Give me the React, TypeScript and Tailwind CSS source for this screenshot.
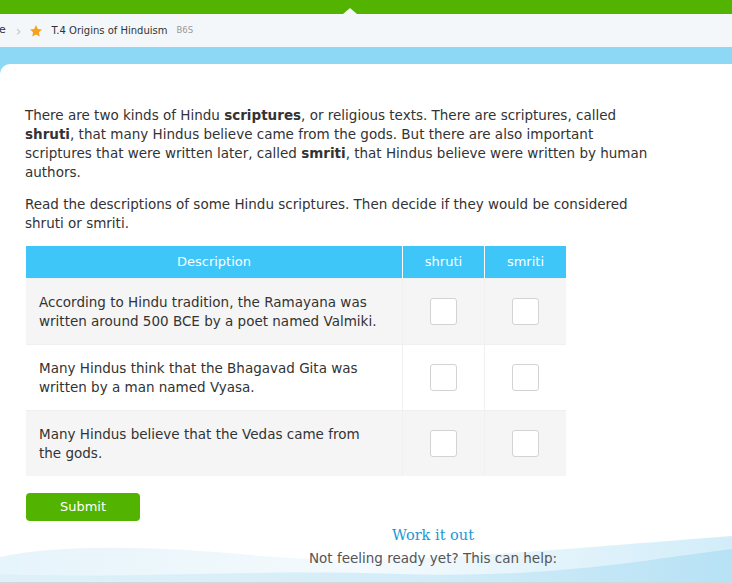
import React from "react";

const rows = [
  "According to Hindu tradition, the Ramayana was written around 500 BCE by a poet named Valmiki.",
  "Many Hindus think that the Bhagavad Gita was written by a man named Vyasa.",
  "Many Hindus believe that the Vedas came from the gods.",
];

function Box() {
  return <div className="w-[27px] h-[27px] bg-white border border-[#d3d3d3] rounded-[3px]" />;
}

export default function App() {
  return (
    <div className="w-[732px] h-[584px] overflow-hidden bg-[#8dd8f5] text-[#333]" style={{ fontFamily: '"DejaVu Sans", Verdana, sans-serif' }}>
      <div className="relative h-[14px] bg-[#52b400]">
        <div className="absolute left-[343px] top-[8px] w-0 h-0 border-l-[7px] border-r-[7px] border-b-[6px] border-l-transparent border-r-transparent border-b-[#f3f7fa]" />
      </div>
      <div className="h-[33px] bg-[#f3f7fa] flex items-center text-[10px]">
        <span className="ml-[-1px] text-[#333] text-[11px]">e</span>
        <span className="ml-[10px] text-[#c4c4c4] text-[14px] leading-none">›</span>
        <svg className="ml-[8px]" width="14" height="14" viewBox="0 0 24 24">
          <path d="M12 1.8l3.1 6.6 7.2.9-5.3 5 1.4 7.1L12 17.9l-6.4 3.5 1.4-7.1-5.3-5 7.2-.9z" fill="#f7a21b" />
        </svg>
        <span className="ml-[8px] text-[#333]">T.4 Origins of Hinduism</span>
        <span className="ml-[9px] text-[8.5px] text-[#999]">B6S</span>
      </div>
      <div className="h-[17px]" />
      <div className="relative h-[520px] bg-white rounded-tl-[10px] overflow-hidden">
        <svg className="absolute left-0 bottom-0" width="732" height="60" viewBox="0 0 732 60" preserveAspectRatio="none">
          <defs>
            <linearGradient id="g1" x1="0" y1="0" x2="1" y2="0">
              <stop offset="0" stopColor="#e6f4fb" />
              <stop offset="0.5" stopColor="#f4fafd" />
              <stop offset="1" stopColor="#d2edf9" />
            </linearGradient>
            <linearGradient id="g2" x1="0" y1="0" x2="1" y2="0">
              <stop offset="0" stopColor="#dcf0fa" />
              <stop offset="0.6" stopColor="#cbe9f7" />
              <stop offset="1" stopColor="#b0dff4" />
            </linearGradient>
          </defs>
          <path d="M0 33 C 60 20, 160 22, 260 32 C 380 42, 500 30, 732 12 L732 60 L0 60 Z" fill="url(#g1)" />
          <path d="M0 50 C 120 55, 250 45, 400 50 C 550 55, 650 35, 732 25 L732 60 L0 60 Z" fill="url(#g2)" opacity="0.8" />
          <rect x="0" y="58" width="732" height="2" fill="#d6d6d6" />
        </svg>
        <div className="relative pl-[25px] pt-[42px]">
          <div className="w-[632px] text-[13.5px] leading-[19px]">
            <p>
              There are two kinds of Hindu <b>scriptures</b>, or religious texts. There are scriptures, called <b>shruti</b>, that many Hindus believe came from the gods. But there are also important scriptures that were written later, called <b>smriti</b>, that Hindus believe were written by human authors.
            </p>
            <p className="mt-[13px]">
              Read the descriptions of some Hindu scriptures. Then decide if they would be considered shruti or smriti.
            </p>
          </div>
          <div className="mt-[13px] ml-[1px] w-[540px]">
            <div className="flex h-[32px] bg-[#3ec6f8] text-white text-[13px]">
              <div className="w-[376px] flex items-center justify-center">Description</div>
              <div className="w-[1px] bg-white" />
              <div className="w-[81px] flex items-center justify-center">shruti</div>
              <div className="w-[1px] bg-white" />
              <div className="w-[81px] flex items-center justify-center">smriti</div>
            </div>
            {rows.map((r, i) => (
              <div key={i} className={`flex h-[66px] border-t border-[#f0f0f0] ${i % 2 === 0 ? "bg-[#f5f5f5]" : "bg-white"}`}>
                <div className="w-[376px] pl-[13px] pr-[21px] flex items-center text-[13.5px] leading-[19px]">{r}</div>
                <div className="w-[1px] bg-[#f0f0f0]" />
                <div className="w-[81px] flex items-center justify-center"><Box /></div>
                <div className="w-[1px] bg-[#f0f0f0]" />
                <div className="w-[81px] flex items-center justify-center"><Box /></div>
              </div>
            ))}
          </div>
          <button className="mt-[17px] ml-[1px] w-[114px] h-[28px] bg-[#52b400] rounded-[4px] text-white text-[13px]">Submit</button>
        </div>
        <div className="relative pl-[134px] mt-[4px] flex flex-col items-center">
          <div className="text-[14.5px] leading-[20px] text-[#1a98d5]" style={{ fontFamily: '"DejaVu Serif", "Liberation Serif", serif' }}>Work it out</div>
          <div className="mt-[3px] text-[13.5px] leading-[20px] text-[#555]">Not feeling ready yet? This can help:</div>
        </div>
      </div>
    </div>
  );
}
